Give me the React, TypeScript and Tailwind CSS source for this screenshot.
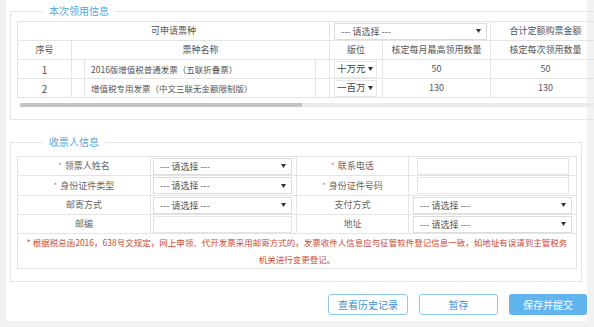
import React from "react";

const FONT = "font-['Noto_Sans_CJK_SC','Noto_Sans',sans-serif]";

function Tri() {
  return (
    <svg width="5" height="4" viewBox="0 0 5 4" className="shrink-0">
      <path d="M0 0 L5 0 L2.5 4 Z" fill="#333" />
    </svg>
  );
}

function Sel({ text = "--- 请选择 ---", className = "" }: { text?: string; className?: string }) {
  return (
    <div
      className={`flex h-[17px] items-center justify-between border border-[#dcdcdc] bg-white pl-[6px] pr-[5px] text-[9px] text-[#555] ${className}`}
    >
      <span className="leading-none">{text}</span>
      <Tri />
    </div>
  );
}

function Star() {
  return <span className="mr-[3px] text-[8px] text-[#e0707a]">*</span>;
}

const td = "border border-[#e4e4e4] p-0 h-[19px] text-center align-middle";

export default function App() {
  return (
    <div className={`h-[327px] w-[594px] overflow-hidden bg-[#f2f2f2] ${FONT}`}>
      <div className="ml-[6px] flex h-[321px] w-[581px] flex-col bg-white pt-[4px]">
        {/* Fieldset 1 */}
        <fieldset className="ml-[4px] mr-[6px] border border-[#e6e6e6] pb-[12px] pl-[6px] pt-[3px]">
          <legend className="ml-[26px] px-[6px] text-[10px] leading-[14px] text-[#4ea6e0]">本次领用信息</legend>
          <div className="overflow-hidden">
            <table className="w-[583px] table-fixed border-collapse text-[9px] text-[#555]">
              <colgroup>
                <col className="w-[54px]" />
                <col className="w-[258px]" />
                <col className="w-[53px]" />
                <col className="w-[108px]" />
                <col className="w-[110px]" />
              </colgroup>
              <tbody>
                <tr>
                  <td className={td} colSpan={2}>可申请票种</td>
                  <td className={td} colSpan={2}>
                    <div className="pl-[4px] pr-[3px]">
                      <Sel />
                    </div>
                  </td>
                  <td className={`${td} whitespace-nowrap`}>合计定额购票金额</td>
                </tr>
                <tr>
                  <td className={td}>序号</td>
                  <td className={td}>票种名称</td>
                  <td className={td}>版位</td>
                  <td className={`${td} whitespace-nowrap`}>核定每月最高领用数量</td>
                  <td className={`${td} whitespace-nowrap`}>核定每次领用数量</td>
                </tr>
                {[
                  { n: "1", name: "2016版增值税普通发票（五联折叠票）", pos: "十万元", a: "50", b: "50" },
                  { n: "2", name: "增值税专用发票（中文三联无金额限制版）", pos: "一百万", a: "130", b: "130" },
                ].map((r) => (
                  <tr key={r.n}>
                    <td className={`${td} text-[10px]`}>{r.n}</td>
                    <td className={td}>
                      <div className="ml-[12px] mr-[13px] flex h-[18px] items-center border-x border-[#e4e4e4] pl-[6px] text-left text-[8.5px] whitespace-nowrap">
                        {r.name}
                      </div>
                    </td>
                    <td className={td}>
                      <div className="ml-[4px] flex h-[17px] w-[43px] items-center justify-between border border-[#e8e8e8] pl-[2px] pr-[3px] text-[9.5px] text-[#444]">
                        <span className="leading-none">{r.pos}</span>
                        <Tri />
                      </div>
                    </td>
                    <td className={td}>{r.a}</td>
                    <td className={td}>{r.b}</td>
                  </tr>
                ))}
              </tbody>
            </table>
          </div>
          <div className="ml-[3px] mr-[2px] mt-[5px] flex h-[4px] bg-[#ececec]">
            <div className="h-full w-[282px] bg-[#c4c4c4]" />
          </div>
        </fieldset>

        {/* Fieldset 2 */}
        <fieldset className="ml-[4px] mr-[6px] mt-[15px] border border-[#e6e6e6] pb-[12px] pl-[6px] pr-[4px] pt-[7px]">
          <legend className="ml-[26px] px-[6px] text-[10px] leading-[14px] text-[#4ea6e0]">收票人信息</legend>
          <table className="w-[559px] table-fixed border-collapse text-[9px] text-[#666]">
            <colgroup>
              <col className="w-[133px]" />
              <col className="w-[146px]" />
              <col className="w-[112px]" />
              <col className="w-[168px]" />
            </colgroup>
            <tbody>
              <tr>
                <td className={td}><Star />领票人姓名</td>
                <td className={td}><div className="ml-[2px] mr-[4px]"><Sel /></div></td>
                <td className={td}><Star />联系电话</td>
                <td className={td}><div className="ml-[8px] mr-[7px] h-[17px] border border-[#e4e4e4]" /></td>
              </tr>
              <tr>
                <td className={`${td} h-[20px]`}><Star />身份证件类型</td>
                <td className={`${td} h-[20px]`}><div className="ml-[2px] mr-[4px]"><Sel /></div></td>
                <td className={`${td} h-[20px]`}><Star />身份证件号码</td>
                <td className={`${td} h-[20px]`}><div className="ml-[8px] mr-[7px] h-[17px] border border-[#e4e4e4]" /></td>
              </tr>
              <tr>
                <td className={td}>邮寄方式</td>
                <td className={td}><div className="ml-[2px] mr-[4px]"><Sel /></div></td>
                <td className={td}>支付方式</td>
                <td className={td}><div className="ml-[4px] mr-[4px]"><Sel /></div></td>
              </tr>
              <tr>
                <td className={td}>邮编</td>
                <td className={td}><div className="ml-[2px] mr-[4px] h-[17px] border border-[#e4e4e4]" /></td>
                <td className={td}>地址</td>
                <td className={td}><div className="ml-[4px] mr-[4px]"><Sel /></div></td>
              </tr>
              <tr>
                <td className={`${td} h-[34px] px-[2px] text-[8.5px] leading-[17px] text-[#cc4a33]`} colSpan={4}>
                  <span className="whitespace-nowrap">* 根据税总函2016，638号文规定，网上申领、代开发票采用邮寄方式的，发票收件人信息应与征管软件登记信息一致，如地址有误请到主管税务</span>
                  <br />
                  机关进行变更登记。
                </td>
              </tr>
            </tbody>
          </table>
        </fieldset>

        {/* Buttons */}
        <div className="mt-[12px] flex justify-end gap-[11px]">
          <button className="h-[21px] w-[80px] rounded-[3px] border border-[#8cc6ea] bg-white text-[10px] text-[#3d93d4]">查看历史记录</button>
          <button className="h-[21px] w-[79px] rounded-[3px] border border-[#8cc6ea] bg-white text-[10px] text-[#3d93d4]">暂存</button>
          <button className="h-[21px] w-[78px] rounded-[3px] bg-[#62b4ee] text-[10px] text-white">保存并提交</button>
        </div>
      </div>
    </div>
  );
}
